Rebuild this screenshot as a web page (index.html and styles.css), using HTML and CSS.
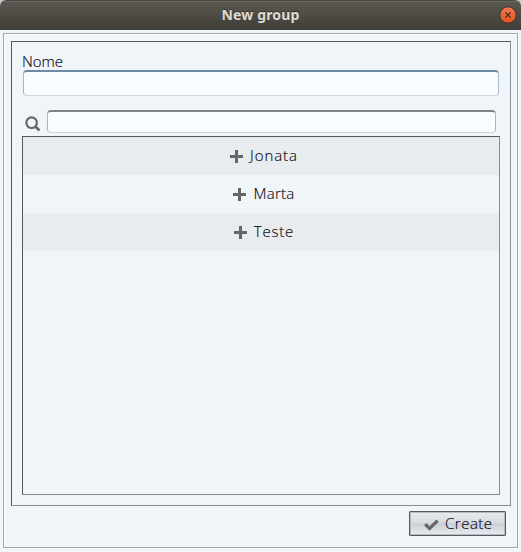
FILE: index.html
```html
<!DOCTYPE html>
<html lang="en">
<head>
<meta charset="utf-8">
<title>New group</title>
<link rel="stylesheet" href="styles.css">
</head>
<body>
<div class="window">
  <header class="titlebar">
    <h1 class="title">New group</h1>
    <button class="close" aria-label="Close"><svg width="18" height="18" viewBox="0 0 18 18"><circle cx="9" cy="9" r="8.2" fill="url(#g)" stroke="#34352f" stroke-width="1"/><path d="M6.4 6.4l5.2 5.2M11.6 6.4l-5.2 5.2" stroke="#47301f" stroke-width="1.3"/><defs><linearGradient id="g" x1="0" y1="0" x2="0" y2="1"><stop offset="0" stop-color="#f47b55"/><stop offset="1" stop-color="#e2501d"/></linearGradient></defs></svg></button>
  </header>
  <main class="frame">
    <section class="panel">
      <label class="label" for="name">Nome</label>
      <input class="field name" id="name" type="text">
      <div class="search">
        <svg class="lens" width="16" height="16" viewBox="0 0 16 16" fill="none" stroke="#666"><circle cx="6.6" cy="6.7" r="5.3" stroke-width="2.2"/><path d="M10.4 10.5l4 4" stroke-width="2.5"/></svg>
        <input class="field query" type="text" aria-label="Search">
      </div>
      <ul class="list">
        <li class="row jonata"><svg class="plus" width="13" height="13" viewBox="0 0 13 13"><path d="M5 0h3v5h5v3H8v5H5V8H0V5h5z" fill="#666"/></svg><span class="text">Jonata</span></li>
        <li class="row marta"><svg class="plus" width="13" height="13" viewBox="0 0 13 13"><path d="M5 0h3v5h5v3H8v5H5V8H0V5h5z" fill="#666"/></svg><span class="text">Marta</span></li>
        <li class="row teste"><svg class="plus" width="13" height="13" viewBox="0 0 13 13"><path d="M5 0h3v5h5v3H8v5H5V8H0V5h5z" fill="#666"/></svg><span class="text">Teste</span></li>
      </ul>
    </section>
    <button class="create"><svg class="check" width="15" height="12" viewBox="0 0 15 12"><path d="M0 6.3L2.3 4l3.3 3.3L12.5.4l2.2 2.3-9.1 9.1z" fill="#666"/></svg><span class="text">Create</span></button>
  </main>
</div>
</body>
</html>
```

FILE: styles.css
```css
* { box-sizing: border-box; }

body {
  margin: 0;
  background: #c3cbd2;
  font: 300 15px/20px "Open Sans", "Noto Sans", sans-serif;
  color: #080810;
  -webkit-text-stroke: 0.15px;
}

button { padding: 0; border: 0; background: none; font: inherit; color: inherit; }

.window {
  display: flex;
  flex-direction: column;
  width: 521px;
  height: 552px;
  background: #f0f5fa;
  border-radius: 6px 6px 0 0;
  overflow: hidden;
}

.titlebar {
  display: grid;
  grid-template-columns: 30px 1fr 30px;
  align-items: center;
  height: 30px;
  flex: none;
  background: linear-gradient(#5b5951, #3f3d37);
  border-top: 1px solid #4b4943;
  box-shadow: inset 0 1px #69675e;
}

.title {
  grid-column: 2;
  margin: 0 0 2px;
  text-align: center;
  font: 700 14px/20px "Noto Sans", sans-serif;
  letter-spacing: 0.15px;
  color: #dfdbd2;
  text-shadow: 0 -1px #35332e;
  -webkit-text-stroke: 0;
}

.close { display: flex; width: 18px; height: 18px; margin-left: 8px; margin-bottom: 1px; }

.frame {
  display: flex;
  flex-direction: column;
  flex: 1;
  margin: 3px 3px 4px;
  padding: 7px 6px 0 7px;
  border: 1px solid #a2a4a6;
  box-shadow: inset 1px 1px #fff, 1px 1px #fff;
}

.panel {
  display: flex;
  flex-direction: column;
  height: 465px;
  padding: 10px;
  border: 1px solid #888c90;
  border-top-color: #55595e;
  border-left-color: #55595e;
}

.label { height: 18px; line-height: 18px; }

.field {
  border: 1px solid #cdd2da;
  border-top: 2px solid #808489;
  border-radius: 4px;
  background: #f8fcff;
  outline: 0;
  padding: 0 5px;
  font: inherit;
}

.name {
  height: 26px;
  margin: 0 1px;
  border-color: #6f8ba3 #a9bacb #cbd7e5 #a0b5c7;
}

.search { display: flex; height: 40px; padding: 14px 4px 0 3px; }
.lens { flex: none; margin: 6px 6px 0 0; }

.query {
  flex: 1;
  min-width: 0;
  height: 23px;
  border-color: #808489 #b0b4b8 #d0d4d9 #b0b4b8;
}

.list {
  flex: 1;
  margin: 0;
  padding: 0;
  list-style: none;
  border: 1px solid #888c90;
  border-top-color: #55595e;
  border-left-color: #55595e;
}

.row {
  display: flex;
  align-items: center;
  justify-content: center;
  gap: 7px;
  height: 38px;
  padding-left: 6px;
}

.row:nth-child(odd) { background: #e8ecef; }
.plus { margin-top: 1px; }
.text { margin-bottom: 2px; letter-spacing: 0.5px; }
.jonata .text { letter-spacing: 0.95px; }
.marta .text { letter-spacing: 0.3px; }
.teste .text { letter-spacing: 0.8px; }

.create {
  display: flex;
  align-items: center;
  align-self: flex-end;
  gap: 6px;
  width: 97px;
  height: 25px;
  margin: 5px 5px 0 0;
  padding-left: 14px;
  border: 1px solid #555a60;
  border-radius: 1px;
  background: linear-gradient(#e8eaee 0, #d9dce0 45%, #cbcfd5 52%, #e9ecf1 100%);
  box-shadow: inset 0 0 0 1px #b5b9be;
}

.check { margin-top: 3px; }
```
